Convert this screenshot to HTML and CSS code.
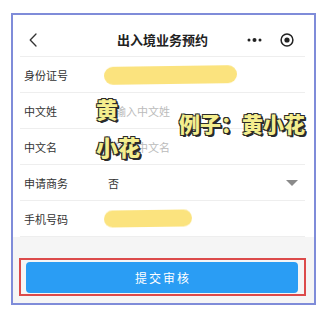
FILE: index.html
```html
<!DOCTYPE html>
<html lang="zh-CN">
<head>
<meta charset="utf-8">
<title>出入境业务预约</title>
<link rel="stylesheet" href="styles.css">
</head>
<body>
<div class="phone">
  <header class="nav">
    <div class="nav-left">
      <svg class="back" width="8" height="14" viewBox="0 0 8 14"><path d="M7 1 L1.2 7 L7 13" fill="none" stroke="#333" stroke-width="1.3" stroke-linecap="round" stroke-linejoin="round"/></svg>
    </div>
    <div class="nav-title">出入境业务预约</div>
    <div class="nav-right">
      <svg width="15" height="6" viewBox="0 0 15 6"><circle cx="2" cy="3" r="1.5" fill="#222"/><circle cx="7.5" cy="3" r="2" fill="#222"/><circle cx="13" cy="3" r="1.5" fill="#222"/></svg>
      <svg width="14" height="14" viewBox="0 0 14 14"><circle cx="7" cy="7" r="5.9" fill="none" stroke="#222" stroke-width="1.5"/><circle cx="7" cy="7" r="2.6" fill="#222"/></svg>
    </div>
  </header>
  <div class="form">
    <div class="row"><span class="label">身份证号</span><span class="value"><span class="blob blob-id"></span></span></div>
    <div class="row"><span class="label">中文姓</span><span class="value placeholder">请输入中文姓</span></div>
    <div class="row"><span class="label">中文名</span><span class="value placeholder">请输入中文名</span></div>
    <div class="row"><span class="label">申请商务</span><span class="value select">否</span><span class="caret"></span></div>
    <div class="row"><span class="label">手机号码</span><span class="value"><span class="blob blob-phone"></span></span></div>
  </div>
  <div class="footer">
    <div class="highlight">
      <button class="submit">提交审核</button>
    </div>
  </div>
  <div class="sticker s1">黄</div>
  <div class="sticker s2">小花</div>
  <div class="sticker s3">例子：黄小花</div>
</div>
</body>
</html>
```
FILE: styles.css
```css
* { box-sizing: border-box; }
html, body {
  margin: 0;
  padding: 0;
  background: #fff;
  font-family: "Noto Sans CJK SC", "Noto Sans", sans-serif;
}
.phone {
  position: relative;
  margin: 13px 0 0 11px;
  width: 305px;
  height: 292px;
  border: 2px solid #7f8cd9;
  display: flex;
  flex-direction: column;
  background: #fff;
}
.nav {
  height: 42px;
  margin: 0 9px 0 7px;
  padding-top: 8px;
  border-bottom: 1px solid #eeeeee;
  display: grid;
  grid-template-columns: 1fr auto 1fr;
  align-items: center;
}
.nav-left { padding-left: 9px; display: flex; align-items: center; }
.nav-title {
  font-size: 13px;
  font-weight: 600;
  color: #222;
  line-height: 1;
}
.nav-right {
  display: flex;
  justify-content: flex-end;
  align-items: center;
  gap: 18px;
  padding-right: 11px;
}
.form { margin: 0 9px 0 7px; }
.row {
  height: 36px;
  border-bottom: 1px solid #eeeeee;
  display: flex;
  align-items: center;
  padding-left: 4px;
  font-size: 11px;
  color: #333;
}
.label { width: 80px; flex: none; }
.value { flex: 1; display: flex; align-items: center; }
.placeholder { color: #bbbbbb; }
.select { padding-left: 4px; color: #333; }
.caret {
  width: 0;
  height: 0;
  border-left: 6px solid transparent;
  border-right: 6px solid transparent;
  border-top: 6px solid #8a8a8a;
  margin-right: 7px;
}
.blob {
  display: block;
  background: #fbe37e;
  border-radius: 10px;
  filter: blur(0.4px);
}
.blob-id { width: 133px; height: 18px; transform: rotate(-0.8deg); }
.blob-phone { width: 88px; height: 17px; transform: rotate(-0.8deg); }
.footer {
  flex: 1;
  background: #f5f5f5;
  padding: 21px 8px 0 6px;
}
.highlight {
  border: 2px solid #dc4a4a;
  padding: 2px 6px 1px 5px;
}
.submit {
  display: block;
  width: 100%;
  height: 31px;
  border: 0;
  border-radius: 4px;
  background: #2a9df4;
  color: #fff;
  font-family: "Noto Sans CJK SC", "Noto Sans", sans-serif;
  font-size: 12px;
  letter-spacing: 2px;
  padding: 0 0 0 2px;
}
.sticker {
  position: absolute;
  line-height: 1;
  font-weight: 900;
  color: #f4ee8e;
  text-shadow: -1px -1px 0 #2b2b2b, 1px -1px 0 #2b2b2b, -1px 1px 0 #2b2b2b, 1px 1px 0 #2b2b2b, 2px 2px 0 #2b2b2b, 2px 1px 0 #2b2b2b;
  white-space: nowrap;
}
.s1 { left: 83px; top: 82px; font-size: 22px; }
.s2 { left: 83px; top: 120px; font-size: 22px; }
.s3 { left: 166px; top: 98px; font-size: 21px; }
```
